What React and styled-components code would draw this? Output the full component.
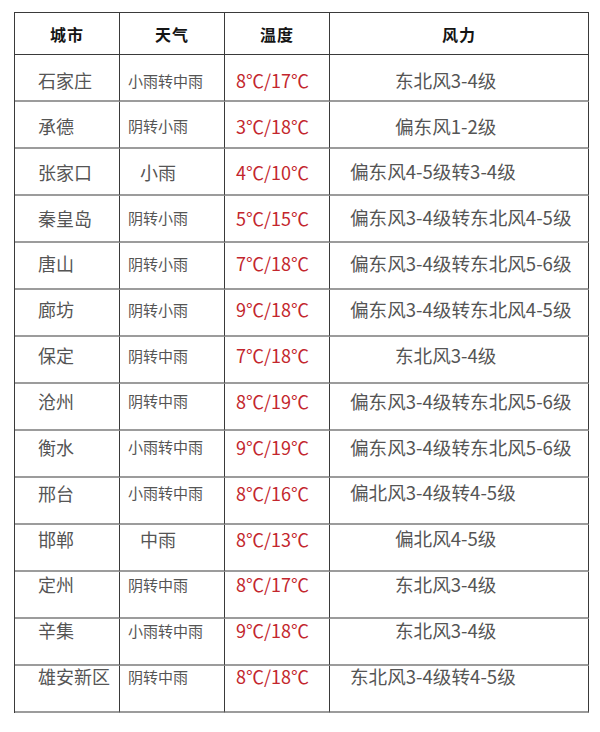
import styled, { createGlobalStyle } from 'styled-components';

const GlobalStyle = createGlobalStyle`
    html, body {
        margin: 0;
        padding: 0;
        background: #ffffff;
    }
    body {
        font-family: "Noto Sans CJK SC", "Noto Sans", sans-serif;
    }
`

const Page = styled.div`
    width: 600px;
    height: 732px;
    padding: 12px 0 0 14px;
    box-sizing: border-box;
    background: #fff;
`

const Table = styled.div`
    width: 574px;
    display: grid;
    grid-template-columns: 105px 105px 105px 259px;
    grid-template-rows: 42px;
    grid-auto-rows: 47px;
    border-top: 1px solid #3a3a3a;
    border-left: 1px solid #3a3a3a;
`

const HeadCell = styled.div`
    box-sizing: border-box;
    display: flex;
    align-items: center;
    justify-content: center;
    border-right: 1px solid #3a3a3a;
    border-bottom: 1px solid #3a3a3a;
    font-size: 16px;
    font-weight: 700;
    color: #151515;
    letter-spacing: 1px;
`

// text drifts up a little in each row of the original, so the top padding follows the row index
const Cell = styled.div`
    box-sizing: border-box;
    display: flex;
    align-items: flex-start;
    border-right: 1px solid #3a3a3a;
    border-bottom: 2px solid #9c9c9c;
    padding-top: ${p => 16 - 1.15 * p.$row + (18 - (p.$size || 18)) / 2}px;
    padding-left: ${p => p.$pad}px;
    font-size: ${p => p.$size || 18}px;
    line-height: 1;
    color: ${p => p.$red ? '#c3262d' : '#555555'};
    white-space: nowrap;
`

const rows = [
    ['石家庄', '小雨转中雨', '8℃/17℃', '东北风3-4级', true],
    ['承德', '阴转小雨', '3℃/18℃', '偏东风1-2级', true],
    ['张家口', '小雨', '4℃/10℃', '偏东风4-5级转3-4级'],
    ['秦皇岛', '阴转小雨', '5℃/15℃', '偏东风3-4级转东北风4-5级'],
    ['唐山', '阴转小雨', '7℃/18℃', '偏东风3-4级转东北风5-6级'],
    ['廊坊', '阴转小雨', '9℃/18℃', '偏东风3-4级转东北风4-5级'],
    ['保定', '阴转中雨', '7℃/18℃', '东北风3-4级', true],
    ['沧州', '阴转中雨', '8℃/19℃', '偏东风3-4级转东北风5-6级'],
    ['衡水', '小雨转中雨', '9℃/19℃', '偏东风3-4级转东北风5-6级'],
    ['邢台', '小雨转中雨', '8℃/16℃', '偏北风3-4级转4-5级'],
    ['邯郸', '中雨', '8℃/13℃', '偏北风4-5级', true],
    ['定州', '阴转中雨', '8℃/17℃', '东北风3-4级', true],
    ['辛集', '小雨转中雨', '9℃/18℃', '东北风3-4级', true],
    ['雄安新区', '阴转中雨', '8℃/18℃', '东北风3-4级转4-5级'],
];

const App = () => {
    return (
        <Page>
            <GlobalStyle />
            <Table>
                <HeadCell>城市</HeadCell>
                <HeadCell>天气</HeadCell>
                <HeadCell>温度</HeadCell>
                <HeadCell>风力</HeadCell>
                {rows.map(([city, weather, temp, wind, indent], i) => {
                    const short = weather.length <= 2;
                    return [
                        <Cell key={city + 'c'} $row={i} $pad={23}>{city}</Cell>,
                        <Cell key={city + 'w'} $row={i} $pad={short ? 20 : 8} $size={short ? 18 : 15}>{weather}</Cell>,
                        <Cell key={city + 't'} $row={i} $pad={11} $red>{temp}</Cell>,
                        <Cell key={city + 'f'} $row={i} $pad={indent ? 65 : 20} $size={18.6}>{wind}</Cell>,
                    ];
                })}
            </Table>
        </Page>
    );
}
export default App;
